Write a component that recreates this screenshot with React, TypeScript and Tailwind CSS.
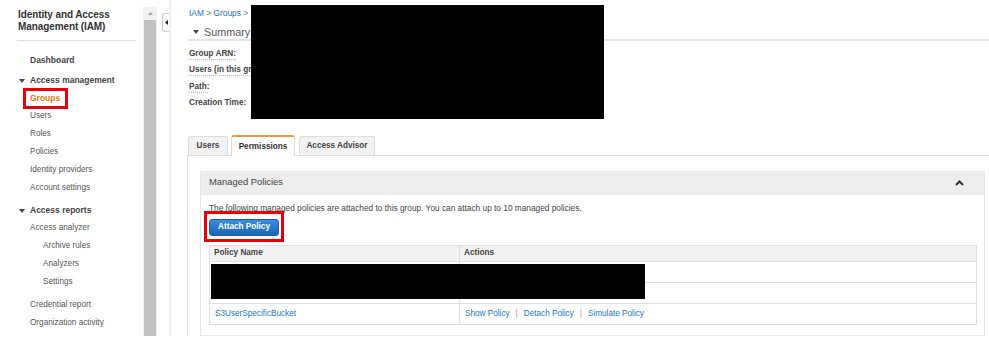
import React from "react";

const Caret = () => (
  <svg width="6" height="4" viewBox="0 0 6 4" className="shrink-0">
    <polygon points="0,0 6,0 3,4" fill="#444" />
  </svg>
);

const NavHeader = ({ label, className = "" }: { label: string; className?: string }) => (
  <div className={`flex items-center pl-[19px] text-[8.5px] font-bold text-[#444] ${className}`}>
    <Caret />
    <span className="ml-[5px]">{label}</span>
  </div>
);

const NavItem = ({ label, sub = false }: { label: string; sub?: boolean }) => (
  <div
    className={`flex h-[18px] items-center text-[8.2px] text-[#555] ${sub ? "pl-[43px]" : "pl-[30px]"}`}
  >
    {label}
  </div>
);

const Sidebar = () => (
  <div className="w-[143px] shrink-0 bg-white">
    <div className="ml-[17px] w-[119px] border-b border-[#ddd] pb-[7px] pt-[9px]">
      <div className="pl-[1px] text-[10px] font-bold leading-[12px] tracking-[-0.1px] text-[#333]">
        Identity and Access
        <br />
        Management (IAM)
      </div>
    </div>

    <div className="mt-[10px] flex h-[18px] items-center pl-[30px] text-[8.5px] font-bold text-[#444]">
      Dashboard
    </div>
    <NavHeader label="Access management" className="mt-[3px] h-[17px]" />
    <div className="relative flex h-[18px] items-center pl-[30px] text-[8.5px] font-bold text-[#e47911]">
      Groups
      <span className="absolute -top-[1px] left-[23px] h-[21px] w-[45px] border-[3px] border-[#e8000b]" />
    </div>
    <NavItem label="Users" />
    <NavItem label="Roles" />
    <NavItem label="Policies" />
    <NavItem label="Identity providers" />
    <NavItem label="Account settings" />

    <NavHeader label="Access reports" className="mt-[5px] h-[17px]" />
    <NavItem label="Access analyzer" />
    <NavItem label="Archive rules" sub />
    <NavItem label="Analyzers" sub />
    <NavItem label="Settings" sub />

    <div className="mt-[5px]">
      <NavItem label="Credential report" />
      <NavItem label="Organization activity" />
    </div>
  </div>
);

const ScrollBar = () => (
  <div className="flex w-[14px] shrink-0 flex-col pt-[7px]">
    <div className="flex h-[13px] items-center justify-center bg-[#f1f1f1]">
      <svg width="5" height="3" viewBox="0 0 5 3">
        <polygon points="0,3 5,3 2.5,0" fill="#a3a3a3" />
      </svg>
    </div>
    <div className="flex-1 bg-[#f1f1f1] px-[1px]">
      <div className="h-full bg-[#c1c1c1]" />
    </div>
  </div>
);

const Tab = ({ label, active = false, w }: { label: string; active?: boolean; w: string }) =>
  active ? (
    <div
      className={`relative z-10 -mb-px flex h-[21px] items-center justify-center rounded-t-[3px] border-x border-t-2 border-x-[#ddd] border-t-[#ec9a3c] bg-white pt-[1px] text-[8.2px] font-bold text-[#333] ${w}`}
    >
      {label}
    </div>
  ) : (
    <div
      className={`flex h-[19px] items-center justify-center rounded-t-[3px] border-x border-t border-[#ddd] bg-[#f2f2f2] pt-[1px] text-[8.2px] font-bold text-[#444] ${w}`}
    >
      {label}
    </div>
  );

export default function App() {
  const labels = ["Group ARN:", "Users (in this group):", "Path:", "Creation Time:"];

  return (
    <div className="relative h-[342px] w-[989px] overflow-hidden bg-white font-['Liberation_Sans',Arial,sans-serif]">
      <div className="flex h-[336px] overflow-hidden">
        <Sidebar />
        <ScrollBar />

        {/* collapse handle */}
        <div className="w-[12px] shrink-0">
          <div className="ml-[5px] mt-[13px] flex h-[19px] w-[7px] items-center justify-end rounded-l-[3px] border border-r-0 border-[#ccc] bg-white pr-[1px]">
            <svg width="3" height="5" viewBox="0 0 3 5">
              <polygon points="3,0 3,5 0,2.5" fill="#222" />
            </svg>
          </div>
        </div>

        <div className="min-w-0 flex-1 border-l-2 border-[#eee] pl-[16px]">
          {/* breadcrumb */}
          <div className="h-[20px] pl-[2px] pt-[7px] text-[8.4px] leading-[13px]">
            <span className="text-[#1b76c8]">IAM</span>
            <span className="text-[#777]"> &gt; </span>
            <span className="text-[#1b76c8]">Groups</span>
            <span className="text-[#777]"> &gt; </span>
          </div>

          {/* summary */}
          <div className="ml-[1px] mt-[5px] flex h-[14px] items-center pl-[5px] text-[10.8px] text-[#555]">
            <Caret />
            <span className="ml-[5px]">Summary</span>
          </div>
          <div className="ml-[1px] border-b-2 border-[#e4e4e4]" />

          <div className="mt-[4.5px]">
            {labels.map((l, i) => (
              <div key={l} className="flex h-[16.5px] items-center pl-[2px] text-[8.2px] font-bold text-[#444]">
                <span
                  className={
                    i < 3 ? "underline decoration-[#bbb] decoration-dotted underline-offset-[3px]" : ""
                  }
                >
                  {l}
                </span>
              </div>
            ))}
          </div>

          {/* tabs */}
          <div className="ml-[1px] mt-[23.5px] flex h-[20px] items-end">
            <Tab label="Users" w="w-[40px]" />
            <div className="ml-[3px]">
              <Tab label="Permissions" active w="w-[64px]" />
            </div>
            <div className="ml-[4px]">
              <Tab label="Access Advisor" w="w-[76px]" />
            </div>
          </div>

          <div className="w-[811px] border border-[#ddd] px-[12px] pt-[15px]">
            <div className="border border-[#e6e6e6]">
              <div className="flex h-[23px] items-center justify-between bg-[#ededed] pb-[2px] pl-[8px] pr-[20px]">
                <span className="text-[9.4px] text-[#444]">Managed Policies</span>
                <svg width="9" height="6" viewBox="0 0 9 6">
                  <polyline points="1,5 4.5,1.5 8,5" fill="none" stroke="#333" strokeWidth="2" />
                </svg>
              </div>

              <div className="pb-[10px] pl-[8px] pt-[7px]">
                <div className="h-[12px] text-[8.3px] leading-[12px] text-[#444]">
                  The following managed policies are attached to this group. You can attach up to 10 managed
                  policies.
                </div>

                <div className="relative mt-[5px] w-[70px]">
                  <button className="flex h-[17px] w-[70px] items-center justify-center rounded-[3px] border border-[#1a5fa8] bg-gradient-to-b from-[#3a8fdc] to-[#1b64b6] text-[8.2px] font-bold text-white">
                    Attach Policy
                  </button>
                  <span className="absolute -bottom-[6px] -left-[5px] -right-[5px] -top-[8px] border-[3px] border-[#e8000b]" />
                </div>

                <div className="mt-[9px] w-[768px] border-x border-t border-[#e0e0e0] text-[8.2px]">
                  <div className="flex h-[16px] border-b border-[#e0e0e0] bg-[#f2f2f2] font-bold text-[#444]">
                    <div className="flex w-[250px] items-center border-r border-[#e0e0e0] pl-[4px]">Policy Name</div>
                    <div className="flex items-center pl-[4px]">Actions</div>
                  </div>
                  {[0, 1].map((r) => (
                    <div key={r} className="flex h-[21px] border-b border-[#e0e0e0]">
                      <div className="w-[250px] border-r border-[#e0e0e0]" />
                    </div>
                  ))}
                  <div className="flex h-[21px] border-b border-[#e0e0e0] text-[#1b76c8]">
                    <div className="flex w-[250px] items-center border-r border-[#e0e0e0] pl-[5px]">
                      S3UserSpecificBucket
                    </div>
                    <div className="flex items-center pl-[5px]">
                      <span>Show Policy</span>
                      <span className="mx-[6px] text-[#999]">|</span>
                      <span>Detach Policy</span>
                      <span className="mx-[6px] text-[#999]">|</span>
                      <span>Simulate Policy</span>
                    </div>
                  </div>
                </div>
              </div>
            </div>
          </div>
        </div>
      </div>

      {/* redactions */}
      <div className="absolute left-[251px] top-[5px] h-[114px] w-[353px] bg-black" />
      <div className="absolute left-[211px] top-[264px] h-[35px] w-[434px] bg-black" />
    </div>
  );
}
